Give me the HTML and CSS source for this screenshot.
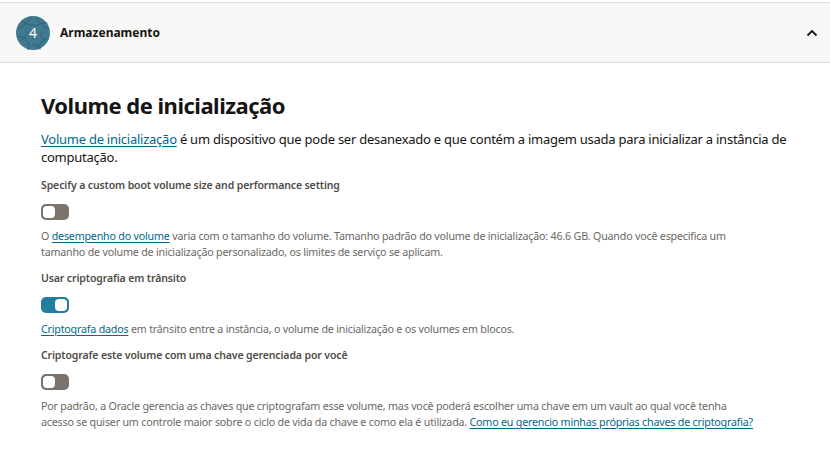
FILE: index.html
```html
<!DOCTYPE html>
<html lang="pt-BR">
<head>
<meta charset="utf-8">
<title>Armazenamento</title>
<link rel="stylesheet" href="styles.css">
</head>
<body>
<div class="page">
  <section class="step">
    <header class="step-header">
      <div class="step-title">
        <span class="step-badge">
          <svg class="badge-art" viewBox="0 0 34 34" width="34" height="34" aria-hidden="true">
            <circle cx="17" cy="17" r="17" fill="#3f7a91"/>
            <g fill="none" stroke="#2c5d70" stroke-width="0.9" stroke-linecap="round">
              <path d="M3 12 C9 9 13 6 15 1"/>
              <path d="M6 5 C10 9 15 10 21 9 C25 8 28 6 31 7"/>
              <path d="M21 1 C22 6 26 11 33 13"/>
              <path d="M2 21 C7 19 10 22 12 27 C13 30 13 32 12 34"/>
              <path d="M24 33 C23 27 26 23 32 22"/>
              <path d="M9 14 C12 17 10 21 6 24"/>
              <path d="M26 16 C24 19 25 22 29 25"/>
              <path d="M17 29 C20 27 22 29 22 33"/>
            </g>
            <text x="17" y="22" text-anchor="middle" class="badge-num">4</text>
          </svg>
        </span>
        <span class="step-name">Armazenamento</span>
      </div>
      <svg class="chevron" viewBox="0 0 12 8" width="12" height="8" aria-hidden="true">
        <path d="M1.5 6.5 L6 2 L10.5 6.5" fill="none" stroke="#161513" stroke-width="1.8"/>
      </svg>
    </header>

    <div class="step-body">
      <h2 class="section-title">Volume de inicialização</h2>
      <p class="intro"><a href="#" class="link">Volume de inicialização</a> é um dispositivo que pode ser desanexado e que contém a imagem usada para inicializar a instância de computação.</p>

      <div class="field">
        <div class="field-label">Specify a custom boot volume size and performance setting</div>
        <span class="switch"><span class="knob"></span></span>
        <p class="help">O <a href="#" class="link">desempenho do volume</a> varia com o tamanho do volume. Tamanho padrão do volume de inicialização: 46.6 GB. Quando você especifica um tamanho de volume de inicialização personalizado, os limites de serviço se aplicam.</p>
      </div>

      <div class="field">
        <div class="field-label">Usar criptografia em trânsito</div>
        <span class="switch on"><span class="knob"></span></span>
        <p class="help"><a href="#" class="link">Criptografa dados</a> em trânsito entre a instância, o volume de inicialização e os volumes em blocos.</p>
      </div>

      <div class="field">
        <div class="field-label">Criptografe este volume com uma chave gerenciada por você</div>
        <span class="switch"><span class="knob"></span></span>
        <p class="help">Por padrão, a Oracle gerencia as chaves que criptografam esse volume, mas você poderá escolher uma chave em um vault ao qual você tenha acesso se quiser um controle maior sobre o ciclo de vida da chave e como ela é utilizada. <a href="#" class="link">Como eu gerencio minhas próprias chaves de criptografia?</a></p>
      </div>
    </div>
  </section>
</div>
</body>
</html>
```

FILE: styles.css
```css
* { box-sizing: border-box; }

html, body {
  margin: 0;
  padding: 0;
  background: #ffffff;
}

body {
  font-family: "Noto Sans", "Open Sans", sans-serif;
  color: #161513;
}

.page {
  padding-top: 2px;
}

.step-header {
  display: flex;
  align-items: center;
  justify-content: space-between;
  height: 61px;
  padding: 0 12px 0 16px;
  background: #f9f8f6;
  border-top: 1px solid #e2dfdb;
  border-bottom: 1px solid #e2dfdb;
}

.step-title {
  display: flex;
  align-items: center;
  gap: 10px;
}

.step-badge {
  display: flex;
  width: 34px;
  height: 34px;
}

.badge-num {
  fill: #ffffff;
  font-family: "Noto Sans", sans-serif;
  font-size: 14px;
}

.step-name {
  font-size: 12px;
  font-weight: 700;
  color: #161513;
}

.chevron {
  display: block;
}

.step-body {
  padding: 27px 30px 20px 41px;
}

.section-title {
  margin: 0 0 10px 0;
  font-size: 22px;
  line-height: 30px;
  font-weight: 700;
  letter-spacing: -0.5px;
  color: #161513;
}

.intro {
  margin: 0 0 11px 0;
  font-size: 13px;
  line-height: 18px;
  letter-spacing: -0.25px;
}

.link {
  color: #00688c;
  text-decoration: underline;
  text-underline-offset: 2px;
}

.field {
  display: flex;
  flex-direction: column;
  align-items: flex-start;
  margin-bottom: 10px;
}

.field-label {
  font-size: 10.5px;
  line-height: 16px;
  font-weight: 600;
  letter-spacing: -0.12px;
  color: #4f4c48;
}

.switch {
  display: flex;
  align-items: center;
  width: 28px;
  height: 16px;
  margin-top: 11px;
  padding: 2px;
  border-radius: 5px;
  background: #7a736e;
}

.switch.on {
  background: #227e9e;
  justify-content: flex-end;
}

.knob {
  width: 12px;
  height: 12px;
  border-radius: 4px;
  background: #ffffff;
}

.help {
  margin: 8px 0 0 0;
  max-width: 716px;
  font-size: 10.7px;
  line-height: 16px;
  letter-spacing: -0.2px;
  color: #6b6863;
}
```
